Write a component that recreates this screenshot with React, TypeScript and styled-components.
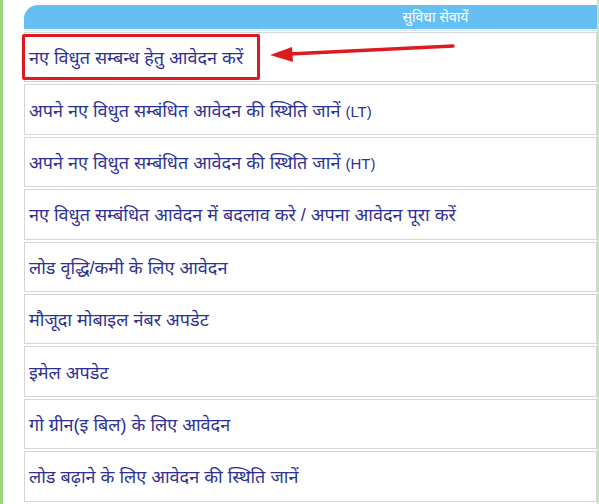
import React from "react";
import styled, { createGlobalStyle } from "styled-components";

const GlobalStyle = createGlobalStyle`
  html, body {
    margin: 0;
    padding: 0;
    background: #ffffff;
  }
  body {
    font-family: "Liberation Sans", "Noto Sans", sans-serif;
  }
`;

const services = [
  "नए विधुत सम्बन्ध हेतु आवेदन करें",
  "अपने नए विधुत सम्बंधित आवेदन की स्थिति जानें (LT)",
  "अपने नए विधुत सम्बंधित आवेदन की स्थिति जानें (HT)",
  "नए विधुत सम्बंधित आवेदन में बदलाव करे / अपना आवेदन पूरा करें",
  "लोड वृद्धि/कमी के लिए आवेदन",
  "मौजूदा मोबाइल नंबर अपडेट",
  "इमेल अपडेट",
  "गो ग्रीन(इ बिल) के लिए आवेदन",
  "लोड बढ़ाने के लिए आवेदन की स्थिति जानें",
];

const Page = styled.div`
  width: 599px;
  height: 504px;
  box-sizing: border-box;
  border-left: 3px solid #9ad67c;
  border-right: 2px solid #c4e8b4;
  padding: 5px 0 0 21px;
  overflow: hidden;
`;

const Panel = styled.div`
  display: flex;
  flex-direction: column;
`;

const Header = styled.div`
  height: 24px;
  background: #66bff3;
  border-top-left-radius: 14px;
  color: #ffffff;
  font-size: 14px;
  line-height: 24px;
  text-align: center;
  padding-left: 250px;
  border-bottom: 1px solid #ffffff;
  box-shadow: 0 1px 0 #d8e6ee;
`;

const List = styled.div`
  display: flex;
  flex-direction: column;
  gap: 2px;
  padding-top: 2px;
`;

const Row = styled.div`
  position: relative;
  height: 50.4px;
  box-sizing: border-box;
  border: 1px solid #d5d5d5;
  display: flex;
  align-items: center;
  padding-left: 4px;
  color: #2e3192;
  font-size: 18px;
  white-space: nowrap;
`;

const Latin = styled.span`
  font-family: "Liberation Sans", Arial, sans-serif;
  font-size: 15px;
`;

const Highlight = styled.div`
  position: absolute;
  left: -3px;
  top: 1px;
  width: 238px;
  height: 46px;
  box-sizing: border-box;
  border: 3px solid #dd1a20;
  border-radius: 2px;
  pointer-events: none;
`;

const Arrow = styled.svg`
  position: absolute;
  left: 244px;
  top: 8px;
  overflow: visible;
`;

function ServiceText({ text }: { text: string }) {
  const m = text.match(/^(.*?)(\((?:LT|HT)\))$/);
  if (!m) return <span>{text}</span>;
  return (
    <span>
      {m[1]}
      <Latin>{m[2]}</Latin>
    </span>
  );
}

export default function App() {
  return (
    <>
      <GlobalStyle />
      <Page>
        <Panel>
          <Header>सुविधा सेवायें</Header>
          <List>
            {services.map((s, i) => (
              <Row key={i}>
                <ServiceText text={s} />
                {i === 0 && (
                  <>
                    <Highlight />
                    <Arrow width="190" height="24" viewBox="0 0 190 24">
                      <path
                        d="M20 13 L184 5"
                        stroke="#dd1a20"
                        strokeWidth="3.5"
                        strokeLinecap="round"
                        fill="none"
                      />
                      <path d="M1 14 L23 6 L24 21 Z" fill="#dd1a20" />
                    </Arrow>
                  </>
                )}
              </Row>
            ))}
          </List>
        </Panel>
      </Page>
    </>
  );
}
